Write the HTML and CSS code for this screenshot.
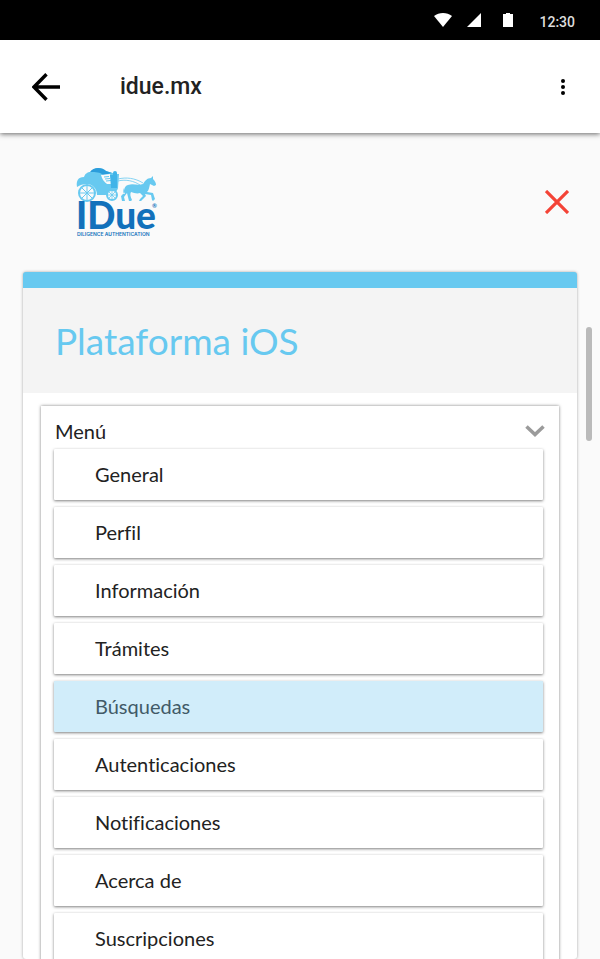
FILE: index.html
```html
<!DOCTYPE html>
<html lang="es">
<head>
    <meta charset="UTF-8">
    <meta name="viewport" content="width=device-width, initial-scale=1.0">
    <title>idue.mx</title>
    <link rel="stylesheet" href="styles.css">
</head>
<body>
    <!-- Status bar -->
    <div class="status-bar">
        <svg width="18" height="14" viewBox="0 0 18 14"><path d="M0 3C5-1 13-1 18 3L9 14z" fill="#fff"/></svg>
        <svg width="14" height="14" viewBox="0 0 14 14"><path d="M14 0v14H0z" fill="#fff"/></svg>
        <svg class="battery" width="10" height="14" viewBox="0 0 10 14"><path d="M3 0h4v1h3v13H0V1h3z" fill="#fff"/></svg>
        <span class="clock">12:30</span>
    </div>

    <!-- App bar -->
    <header class="app-bar">
        <button class="icon-button" aria-label="Atrás">
            <svg width="28" height="28" viewBox="0 0 28 28"><path d="M28 14H3M14.500 1.300L2 14l12.500 12.700" fill="none" stroke="#000" stroke-width="3.400"/></svg>
        </button>
        <span class="app-title">idue.mx</span>
        <button class="icon-button" aria-label="Más opciones">
            <svg width="4" height="16" viewBox="0 0 4 16"><circle cx="2" cy="2" r="2"/><circle cx="2" cy="8" r="2"/><circle cx="2" cy="14" r="2"/></svg>
        </button>
    </header>

    <main class="content">
        <div class="brand">
            <svg class="logo" width="84" height="72" viewBox="0 0 84 72" role="img" aria-label="IDue Diligence Authentication">
                <!-- Carriage -->
                <path d="M2 21C1 15 3 11 9 11c1-3 3-5 7-5 3-5 11-5 15-1l10 3h3l-1 14c-1 4-5 7-13 7h-8C22 22 17 18 12 18c-4 0-7 1-10 3z" fill="#67c9f0"/>
                <path d="M15 6c3-5 12-5 16-1l6 2-9 2c-3-3-7-3-13-3z" fill="#2b9ddb"/>
                <path d="M26 9l9-1 2 10h-5c-3-2-5-5-6-9z" fill="#fafafa"/>
                <path d="M29 11l5-.500M30 13l5-.500M31 15l5-.500" stroke="#67c9f0"/>
                <path d="M35 9h7v13h-6zM38 7a2 2 0 1 1 4 0v3h-4z" fill="#40b4e8"/>
                <g fill="none" stroke="#67c9f0">
                    <circle cx="12" cy="27" r="8" fill="#fafafa" stroke-width="2"/>
                    <path d="M12 19v16M4 27h16M6 21l12 12M18 21L6 33"/>
                    <circle cx="37" cy="29" r="5" fill="#fafafa" stroke-width="2"/>
                    <path d="M37 24v10M32 29h10M33 25l8 8M41 25l-8 8" stroke-width=".8"/>
                    <path d="M43 13c8-2 17-1 25 4M43 15c8-2 16 0 22 4" stroke-width=".8"/>
                </g>
                <!-- Horse -->
                <path d="M50 28c-2-2-1-8 3-9 5-2 10 1 15-1 2-3 4-6 8-6l2-2 0 3c2 2 3 4 3 6l-2 1-4-2c-1 4-1 6-3 8l6 1 2 6-2 2-1-1-1-5-6-1 1 2-5 5h-2l1-2 3-3-3-3c-3 1-6 0-9-1-1 2-1 4 1 8l-1 1h-2l-2-8-3 4 1 4h-3l-1-5c3-2 3-5 3-8-1 2-1 5-1 6z" fill="#67c9f0"/>
                <g fill="#1271bb">
                    <text class="logo-name" x="1" y="63">IDue</text>
                    <text class="logo-mark" x="77" y="42">®</text>
                    <text class="logo-tagline" x="2" y="70">DILIGENCE AUTHENTICATION</text>
                </g>
            </svg>
            <button class="icon-button" aria-label="Cerrar">
                <svg width="24" height="24" viewBox="0 0 24 24"><path d="M1 1l22 22M23 1L1 23" stroke="#f44336" stroke-width="3.200"/></svg>
            </button>
        </div>

        <section class="card">
            <h1 class="card-title">Plataforma iOS</h1>
            <nav class="menu">
                <button class="menu-toggle" aria-expanded="true">
                    Menú
                    <svg width="20" height="12" viewBox="0 0 20 12"><path d="M1.500 1.500L10 9.500l8.500-8" fill="none" stroke="#9b9b9b" stroke-width="3.600"/></svg>
                </button>
                <ul class="menu-list">
                    <li><a href="#">General</a></li>
                    <li><a href="#">Perfil</a></li>
                    <li><a href="#">Información</a></li>
                    <li><a href="#">Trámites</a></li>
                    <li><a href="#" class="active">Búsquedas</a></li>
                    <li><a href="#">Autenticaciones</a></li>
                    <li><a href="#">Notificaciones</a></li>
                    <li><a href="#">Acerca de</a></li>
                    <li><a href="#">Suscripciones</a></li>
                </ul>
            </nav>
        </section>

        <div class="scroll-thumb"></div>
    </main>
</body>
</html>
```
FILE: styles.css
```css
/* Global Styles */
* {
    box-sizing: border-box;
}

body {
    margin: 0;
    height: 100vh;
    display: flex;
    flex-direction: column;
    overflow: hidden;
    background-color: #fafafa;
    color: #222;
    font-family: Futura, 'Lato', sans-serif;
    font-size: 20px;
    font-variant-ligatures: none;
}

svg {
    display: block;
}

button {
    padding: 0;
    border: none;
    background: none;
    color: inherit;
    font: inherit;
    cursor: pointer;
}

/* Status Bar */
.status-bar {
    flex: none;
    height: 40px;
    padding: 0 25px;
    display: flex;
    align-items: center;
    justify-content: flex-end;
    gap: 15px;
    background-color: #000;
}

.battery {
    margin: 0 11px 0 7px;
}

.clock {
    color: #ddd;
    font: 500 14px/20px 'Roboto', sans-serif;
    padding-top: 4px;
}

/* App Bar */
.app-bar {
    position: relative;
    flex: none;
    height: 93px;
    padding: 0 35px 0 32px;
    display: flex;
    align-items: center;
    background-color: #fff;
    box-shadow: 0 1px 5px rgba(0, 0, 0, 0.6);
}

.app-title {
    flex: 1;
    margin-left: 60px;
    font: 500 23px/32px 'Roboto', sans-serif;
}

/* Content */
.content {
    position: relative;
    flex: 1;
    min-height: 0;
    padding: 33px 22px 0;
    display: flex;
    flex-direction: column;
}

.brand {
    flex: none;
    padding: 0 9px 0 53px;
    margin-bottom: 34px;
    display: flex;
    align-items: center;
    justify-content: space-between;
}

.logo {
    overflow: visible;
}

.logo-name {
    font: 900 37px 'Lato', sans-serif;
}

.logo-mark {
    font: 700 6px 'Lato', sans-serif;
}

.logo-tagline {
    font: 600 5px 'Inter', sans-serif;
}

/* Card */
.card {
    flex: 1;
    min-height: 0;
    margin: 0 1px;
    overflow: hidden;
    border-top: 16px solid #67c9f0;
    border-radius: 3px;
    background-color: #fff;
    box-shadow: 0 0 3px rgba(0, 0, 0, 0.35);
}

.card-title {
    margin: 0;
    padding: 29px 32px 28px;
    background-color: #f4f4f4;
    color: #67c9f0;
    font-size: 37px;
    font-weight: 400;
    line-height: 48px;
}

/* Menu */
.menu {
    margin: 13px 18px;
    padding: 10px 16px 12px 13px;
    box-shadow: 0 0 3px rgba(0, 0, 0, 0.5);
}

.menu-toggle {
    width: 100%;
    padding: 0 0 0 1px;
    display: flex;
    align-items: center;
    justify-content: space-between;
    line-height: 30px;
}

.menu-toggle svg {
    margin-right: -2px;
}

.menu-list {
    margin: 3px 0 0;
    padding: 0;
    list-style: none;
    display: grid;
    gap: 7px;
}

.menu-list a {
    display: block;
    padding: 0 41px;
    border-radius: 1px;
    background-color: #fff;
    box-shadow: 0 1px 3px rgba(0, 0, 0, 0.5);
    color: inherit;
    line-height: 51px;
    text-decoration: none;
}

.menu-list .active {
    background-color: #d1edfa;
    color: #415a67;
}

/* Scroll Thumb */
.scroll-thumb {
    position: absolute;
    top: 194px;
    right: 8px;
    width: 6px;
    height: 114px;
    border-radius: 3px;
    background-color: #bababa;
}
```
